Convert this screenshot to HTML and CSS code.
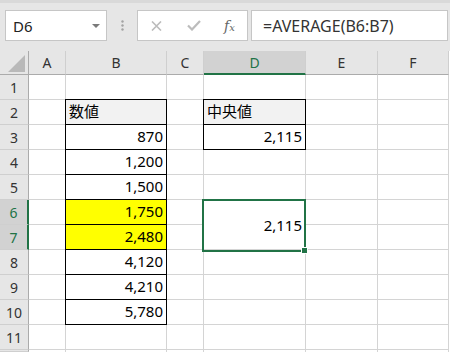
FILE: index.html
```html
<!DOCTYPE html>
<html lang="ja">
<head>
<meta charset="utf-8">
<title>Excel</title>
<link rel="stylesheet" href="styles.css">
</head>
<body>
<div class="toolbar">
  <div class="namebox"><span>D6</span><svg class="dd" width="8" height="4" viewBox="0 0 8 4"><path d="M0 0H8L4 4Z" fill="#7a7a7a"/></svg></div>
  <div class="dots"><svg width="3" height="11" viewBox="0 0 3 11"><circle cx="1.5" cy="1.5" r="1.2" fill="#a3a3a3"/><circle cx="1.5" cy="5.5" r="1.2" fill="#a3a3a3"/><circle cx="1.5" cy="9.5" r="1.2" fill="#a3a3a3"/></svg></div>
  <div class="btns">
    <span class="btn"><svg width="11" height="10" viewBox="0 0 11 10"><path d="M1 0.5L10 9.5M10 0.5L1 9.5" stroke="#bcbcbc" stroke-width="1.6" fill="none"/></svg></span>
    <span class="btn"><svg width="14" height="11" viewBox="0 0 14 11"><path d="M1 5.5L5 9.5L13 1" stroke="#bcbcbc" stroke-width="2.2" fill="none"/></svg></span>
    <span class="btn fx">f<span class="fxx">x</span></span>
  </div>
  <div class="formula">=AVERAGE(B6:B7)</div>
</div>
<div class="sheet">
  <div class="corner"><svg width="17" height="17" viewBox="0 0 17 17"><path d="M17 0V17H0Z" fill="#b9b9b9"/></svg></div>
  <div class="ch">A</div><div class="ch">B</div><div class="ch">C</div><div class="ch on">D</div><div class="ch">E</div><div class="ch">F</div>

  <div class="rh">1</div><div class="c"></div><div class="c"></div><div class="c"></div><div class="c"></div><div class="c"></div><div class="c"></div>

  <div class="rh">2</div><div class="c"></div><div class="c bx hd">数値</div><div class="c"></div><div class="c bx hd">中央値</div><div class="c"></div><div class="c"></div>

  <div class="rh">3</div><div class="c"></div><div class="c bx num">870</div><div class="c"></div><div class="c bx num">2,115</div><div class="c"></div><div class="c"></div>

  <div class="rh">4</div><div class="c"></div><div class="c bx num">1,200</div><div class="c"></div><div class="c"></div><div class="c"></div><div class="c"></div>

  <div class="rh">5</div><div class="c"></div><div class="c bx num">1,500</div><div class="c"></div><div class="c"></div><div class="c"></div><div class="c"></div>

  <div class="rh on">6</div><div class="c"></div><div class="c bx num yel">1,750</div><div class="c"></div><div class="c num merged">2,115<div class="sel"><div class="handle"></div></div></div><div class="c"></div><div class="c"></div>

  <div class="rh on">7</div><div class="c"></div><div class="c bx num yel">2,480</div><div class="c"></div><div class="c"></div><div class="c"></div>

  <div class="rh">8</div><div class="c"></div><div class="c bx num">4,120</div><div class="c"></div><div class="c"></div><div class="c"></div><div class="c"></div>

  <div class="rh">9</div><div class="c"></div><div class="c bx num">4,210</div><div class="c"></div><div class="c"></div><div class="c"></div><div class="c"></div>

  <div class="rh">10</div><div class="c"></div><div class="c bx num">5,780</div><div class="c"></div><div class="c"></div><div class="c"></div><div class="c"></div>

  <div class="rh">11</div><div class="c"></div><div class="c"></div><div class="c"></div><div class="c"></div><div class="c"></div><div class="c"></div>

  <div class="rh"></div><div class="c"></div><div class="c"></div><div class="c"></div><div class="c"></div><div class="c"></div><div class="c"></div>
</div>
</body>
</html>
```
FILE: styles.css
```css
* { box-sizing: border-box; margin: 0; padding: 0; }
html, body { width: 450px; height: 352px; overflow: hidden; }
body {
  background: #fff;
  font-family: "Noto Sans", "Noto Sans CJK JP", sans-serif;
  color: #000;
}

/* ---------- formula bar ---------- */
.toolbar {
  height: 51px;
  background: #e6e6e6;
  border-top: 3px solid #d9d9d9;
  padding: 7px 0 0 5px;
  display: flex;
  align-items: flex-start;
}
.namebox {
  width: 102px;
  height: 31px;
  background: #fff;
  border: 1px solid #c6c6c6;
  display: flex;
  align-items: center;
  justify-content: space-between;
  padding: 0 6px 0 7px;
  font-size: 15px;
  color: #222;
}
.dots {
  width: 30px;
  height: 31px;
  display: flex;
  align-items: center;
  justify-content: center;
}
.btns {
  width: 111px;
  height: 31px;
  background: #fff;
  border: 1px solid #c6c6c6;
  display: grid;
  grid-template-columns: 37px 37px 1fr;
  align-items: center;
}
.btn {
  display: flex;
  justify-content: center;
  align-items: center;
}
.fx {
  font-family: "DejaVu Serif", serif;
  font-style: italic;
  font-size: 14px;
  color: #666;
  align-items: baseline;
}
.fxx { font-size: 10px; }
.formula {
  margin-left: 3px;
  width: 197px;
  height: 31px;
  background: #fff;
  border: 1px solid #c6c6c6;
  padding-left: 11px;
  display: flex;
  align-items: center;
  font-size: 16px;
  color: #333;
}

/* ---------- sheet grid ---------- */
.sheet {
  display: grid;
  grid-template-columns: 29px 37px 101px 37px 102px 72px 71px;
  grid-template-rows: 24px repeat(11, 25px) 2px;
  font-size: 15px;
}
.corner {
  background: #e6e6e6;
  border-right: 1px solid #ababab;
  border-bottom: 1px solid #ababab;
  display: flex;
  justify-content: flex-end;
  align-items: flex-end;
  padding: 0 3px 2px 0;
}
.ch, .rh {
  background: #e6e6e6;
  display: flex;
  align-items: center;
  justify-content: center;
  font-size: 14px;
  color: #333;
}
.ch {
  border-right: 1px solid #cfcfcf;
  border-bottom: 1px solid #ababab;
}
.rh {
  border-right: 1px solid #ababab;
  border-bottom: 1px solid #cfcfcf;
}
.ch.on {
  background: #d2d2d2;
  color: #217346;
  border-bottom: 2px solid #217346;
}
.rh.on {
  background: #d2d2d2;
  color: #217346;
  border-right: 2px solid #217346;
}

.c {
  border-right: 1px solid #d4d4d4;
  border-bottom: 1px solid #d4d4d4;
  display: flex;
  align-items: flex-end;
  padding: 0 3px 3px 3px;
  line-height: 20px;
  white-space: nowrap;
}
.num { justify-content: flex-end; }
.bx {
  border-right-color: #000;
  border-bottom-color: #000;
  box-shadow: -1px 0 0 #000, 0 -1px 0 #000, -1px -1px 0 #000;
}
.hd { background: #f2f2f2; }
.yel { background: #ffff00; }

.merged {
  grid-row: span 2;
  position: relative;
  align-items: center;
  padding: 0 3px;
}
.sel {
  position: absolute;
  left: -2px;
  top: -1px;
  right: -1px;
  bottom: -3px;
  border: 2px solid #217346;
  z-index: 1;
}
.handle {
  position: absolute;
  left: 98px;
  top: 47px;
  width: 5px;
  height: 5px;
  background: #217346;
  box-shadow: 0 0 0 1px #fff;
}
```
